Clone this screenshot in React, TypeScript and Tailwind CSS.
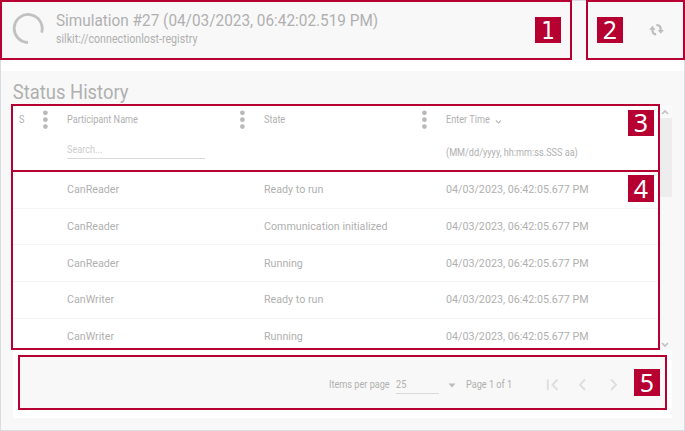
import React from "react";

const rows = [
  ["CanReader", "Ready to run"],
  ["CanReader", "Communication initialized"],
  ["CanReader", "Running"],
  ["CanWriter", "Ready to run"],
  ["CanWriter", "Running"],
];

function Badge({ n, className = "h-[26px]" }: { n: number; className?: string }) {
  return (
    <div
      className={`flex w-[26px] shrink-0 items-center justify-center bg-[#b70032] leading-none text-white ${className} ${
        n === 1
          ? "pt-px font-['DejaVu_Sans_Condensed','DejaVu_Sans',sans-serif] text-[24px]"
          : "pb-px font-['Noto_Sans',sans-serif] text-[25px]"
      }`}
    >
      <span>{n}</span>
    </div>
  );
}

function Label({ children, className = "" }: { children: React.ReactNode; className?: string }) {
  return <span className={`inline-block origin-left scale-x-[0.87] text-[10.5px] ${className}`}>{children}</span>;
}

function Cell({ children }: { children: React.ReactNode }) {
  return <span className="inline-block origin-left scale-x-[0.93] text-[11.5px]">{children}</span>;
}

function Dots() {
  return (
    <svg className="mt-[3px] h-[22px] w-[6px] shrink-0" viewBox="0 0 6 22" fill="#b9b9b9">
      <circle cx="3.4" cy="3.8" r="2.4" />
      <circle cx="3.4" cy="10.7" r="2.4" />
      <circle cx="3.4" cy="17.6" r="2.4" />
    </svg>
  );
}

export default function App() {
  return (
    <div className="flex h-[431px] w-[685px] flex-col overflow-hidden whitespace-nowrap bg-white font-[Roboto,sans-serif] text-[#b0b0b0]">
      <header className="flex h-[60px] shrink-0 bg-white">
        <div className="flex h-[60px] w-[572px] border-2 border-[#b70032] bg-[#f8f8f8]">
          <svg className="ml-[10px] mt-[10px] h-[32px] w-[32px] shrink-0" viewBox="0 0 32 32" fill="none" stroke="#c0c2c1" strokeWidth="2.8">
            <path d="M16 30.5A14 14 0 1 1 29.6 20.6" />
          </svg>
          <div className="ml-[12px] flex w-[420px] flex-col items-start pt-[8px]">
            <h1 className="origin-left scale-x-[0.93] text-[16.5px] leading-[21px]">Simulation #27 (04/03/2023, 06:42:02.519 PM)</h1>
            <p className="mt-px origin-left scale-x-[0.89] text-[12px] leading-[15px]">silkit://connectionlost-registry</p>
          </div>
          <div className="ml-auto mr-[9px] pt-[15px]">
            <Badge n={1} />
          </div>
        </div>
        <div className="h-[59px] w-[14px] border-t border-[#dadcdf] bg-[#f8f8f8]" />
        <div className="flex h-[60px] w-[99px] border-2 border-[#b70032] bg-[#f8f8f8] pl-[9px] pt-[15px]">
          <Badge n={2} />
          <svg className="ml-[26px] mt-[5px] h-[16px] w-[16px]" viewBox="0 0 16 16">
            <path d="M7.2 12.2C4.5 12.5 3.3 10.6 3.5 7M7.4 3.2C10.6 2.8 11.8 4.8 11.6 8.4" fill="none" stroke="#bfbfbf" strokeWidth="2.3" />
            <path d="M0.2 7.7 3.4 3.8 6.6 7.7ZM8.6 7.9H15L11.8 11.8Z" fill="#bfbfbf" />
          </svg>
        </div>
      </header>

      <div className="h-[11px] shrink-0 border-x border-[#dadcdf]" />

      <main className="flex h-[360px] flex-col border-x border-b border-[#dadcdf] bg-[#f8f8f8] pl-[10px]">
        <h2 className="h-[33px] w-[200px] origin-left scale-x-[0.92] pl-[2px] pt-[9px] text-[20px] leading-[24px]">Status History</h2>

        <div className="flex h-[246px]">
          <div className="flex w-[649px] flex-col border-2 border-[#b70032] bg-white">
            <div className="flex h-[66px] border-b-2 border-[#b70032] leading-[12px]">
              <div className="flex w-[54px] pl-[6px]">
                <div className="flex w-[23px] items-start pt-[8px]"><Label>S</Label></div>
                <Dots />
              </div>
              <div className="flex w-[197px]">
                <div className="w-[172px] pt-[8px]">
                  <div className="flex"><Label>Participant Name</Label></div>
                  <div className="mt-[18px] flex h-[15px] w-[138px] border-b border-[#d9d9d9] text-[#cdcdcd]"><Label>Search...</Label></div>
                </div>
                <Dots />
              </div>
              <div className="flex w-[182px]">
                <div className="flex w-[157px] items-start pt-[8px]"><Label>State</Label></div>
                <Dots />
              </div>
              <div className="w-[160px] pt-[8px]">
                <div className="flex items-center">
                  <Label className="w-[49px]">Enter Time</Label>
                  <svg className="mt-[3px] h-[6px] w-[7px]" viewBox="0 0 7 6" fill="none" stroke="#bbb" strokeWidth="1.2">
                    <path d="M1 1.5 3.5 4 6 1.5" />
                  </svg>
                </div>
                <div className="mt-[21px] flex"><Label>(MM/dd/yyyy, hh:mm:ss.SSS aa)</Label></div>
              </div>
              <div className="ml-auto mr-[4px] pt-[4px]">
                <Badge n={3} />
              </div>
            </div>

            <div className="flex h-[176px]">
              <div className="w-[615px]">
                {rows.map(([name, state], i) => (
                  <div key={i} className={`flex items-center pl-[54px] ${i === 4 ? "h-[35px]" : "h-[36.7px] border-b border-[#f5f5f5]"}`}>
                    <div className="flex w-[197px]"><Cell>{name}</Cell></div>
                    <div className="flex w-[182px]"><Cell>{state}</Cell></div>
                    <div className="flex"><Cell>04/03/2023, 06:42:05.677 PM</Cell></div>
                  </div>
                ))}
              </div>
              <div className="relative w-[30px]">
                {rows.slice(0, 4).map((_, i) => (
                  <div key={i} className="h-[36.7px] border-b border-[#f5f5f5]" />
                ))}
                <div className="absolute left-0 top-[3px]">
                  <Badge n={4} className="h-[27px]" />
                </div>
              </div>
            </div>
          </div>
          <div className="flex w-[12px] flex-col bg-[#f8f8f8]">
            <div className="mt-px flex h-[13px] items-center justify-center bg-[#fafafa]">
              <svg className="mr-[2px] h-[6px] w-[8px]" viewBox="0 0 8 6" fill="none" stroke="#c2c2c2" strokeWidth="1.7">
                <path d="M1 5 4 2 7 5" />
              </svg>
            </div>
            <div className="h-[79px] bg-[#ededed]" />
            <svg className="mb-[2px] ml-[1px] mt-auto h-[6px] w-[8px]" viewBox="0 0 8 6" fill="none" stroke="#c2c2c2" strokeWidth="1.7">
              <path d="M1 1 4 4 7 1" />
            </svg>
          </div>
        </div>

        <div className="ml-[2px] h-[68px] w-[659px] bg-white pl-[5px] pt-[5px]">
          <div className="flex h-[55px] w-[649px] items-start border-2 border-[#b70032] bg-[#f8f8f8] leading-[12px]">
            <div className="ml-[309px] mt-[22px] flex w-[67px]"><Label>Items per page</Label></div>
            <div className="mt-[22px] flex h-[15px] w-[43px] border-b border-[#d9d9d9]"><Label>25</Label></div>
            <svg className="ml-[9px] mt-[26px] h-[5px] w-[8px]" viewBox="0 0 8 5">
              <path d="M0.5 0.5H7.5L4 4.5Z" fill="#bbb" />
            </svg>
            <div className="ml-[10px] mt-[22px] flex w-[80px]"><Label>Page 1 of 1</Label></div>
            <svg className="mt-[21px] h-[13px] w-[75px]" viewBox="0 0 75 13" fill="none" stroke="#dedede" strokeWidth="1.9">
              <path d="M1.8 1.5V12M11.5 1.5 6.5 6.7 11.5 12M39 1.5 34 6.7 39 12M65 1.5 70 6.7 65 12" />
            </svg>
            <div className="ml-auto mr-[5px] mt-[12px]">
              <Badge n={5} className="h-[27px]" />
            </div>
          </div>
        </div>
      </main>
    </div>
  );
}
